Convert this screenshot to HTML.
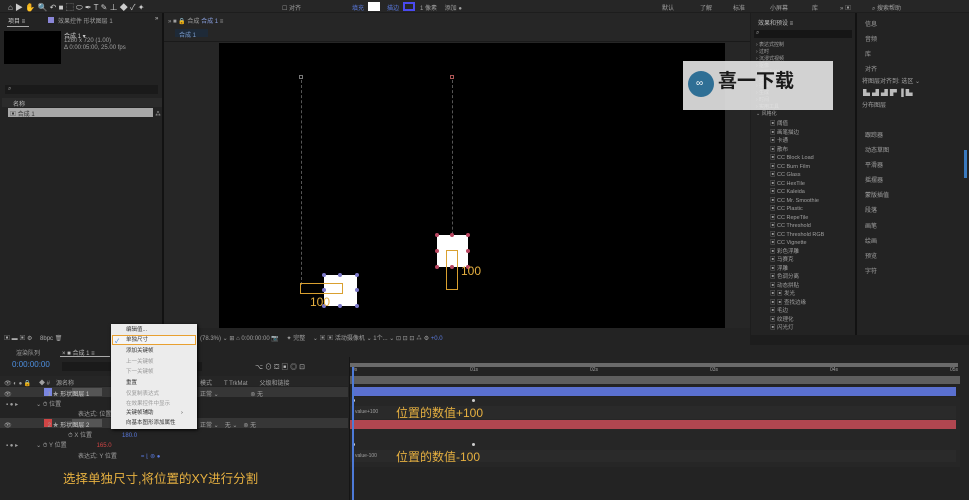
<!DOCTYPE html>
<html><head><meta charset="utf-8"><style>
*{margin:0;padding:0;box-sizing:border-box}
body{width:969px;height:500px;background:#1d1d1d;position:relative;overflow:hidden;font-family:"Liberation Sans","Noto Sans CJK SC",sans-serif;color:#9a9a9a;font-size:6px}
.a{position:absolute}
.t{position:absolute;white-space:nowrap;font-size:6px;color:#a0a0a0}
.cn{font-family:"Liberation Sans","Noto Sans CJK SC",sans-serif}
.dot{position:absolute;width:4px;height:4px;border-radius:50%}
</style></head><body>
<!-- top toolbar -->
<div class="a" style="left:0;top:0;width:969px;height:12px;background:#262626"></div>
<div class="t" style="left:8px;top:2px;color:#ccc;font-size:8px">⌂ ▶ ✋ 🔍 ↶ ■ ⬚ ⬭ ✒ T ✎ ⊥ ◆ ✓ ✦</div>
<div class="t" style="left:282px;top:3px">☐ 对齐</div>
<div class="t" style="left:352px;top:3px;color:#5a7adf">填充</div>
<div class="a" style="left:368px;top:2px;width:12px;height:9px;background:#fff"></div>
<div class="t" style="left:387px;top:3px;color:#5a7adf">描边</div>
<div class="a" style="left:403px;top:2px;width:12px;height:9px;border:2px solid #4a4af0"></div>
<div class="t" style="left:420px;top:3px">1 像素　 添加 ●</div>
<div class="t" style="left:662px;top:3px">默认</div><div class="t" style="left:700px;top:3px">了解</div>
<div class="t" style="left:733px;top:3px">标准</div><div class="t" style="left:770px;top:3px">小屏幕</div>
<div class="t" style="left:812px;top:3px">库</div><div class="t" style="left:840px;top:3px">» ▣</div>
<div class="t" style="left:872px;top:3px">⌕ 搜索帮助</div>
<!-- left project panel -->
<div class="a" style="left:0;top:13px;width:162px;height:315px;background:#232323"></div>
<div class="t" style="left:8px;top:16px;color:#ccc">项目 ≡</div>
<div class="a" style="left:7px;top:26px;width:22px;height:1px;background:#aaa"></div>
<div class="a" style="left:48px;top:17px;width:6px;height:6px;background:#8a86d8"></div>
<div class="t" style="left:58px;top:16px">效果控件 形状图层 1</div>
<div class="t" style="left:155px;top:16px;color:#ccc">»</div>
<div class="a" style="left:4px;top:31px;width:57px;height:33px;background:#000"></div>
<div class="t" style="left:64px;top:31px;color:#ccc">合成 1 ▾</div>
<div class="t" style="left:64px;top:38px">1280 x 720 (1.00)</div>
<div class="t" style="left:64px;top:45px">Δ 0:00:05:00, 25.00 fps</div>
<div class="a" style="left:5px;top:85px;width:153px;height:9px;background:#1a1a1a"></div>
<div class="t" style="left:8px;top:86px">⌕</div>
<div class="a" style="left:2px;top:98px;width:160px;height:9px;background:#2b2b2b"></div>
<div class="t" style="left:13px;top:99px;color:#bbb">名称</div>
<div class="a" style="left:8px;top:108px;width:145px;height:9px;background:#a8a8a8"></div>
<div class="t" style="left:10px;top:109px;color:#333">▣ 合成 1</div>
<div class="t" style="left:155px;top:109px;color:#ccc">⁂</div>
<div class="a" style="left:162px;top:13px;width:2px;height:315px;background:#121212"></div>
<!-- comp panel -->
<div class="a" style="left:164px;top:13px;width:586px;height:315px;background:#262626"></div>
<div class="t" style="left:168px;top:16px">» ■ 🔒 合成 <span style="color:#8aa0e0">合成 1</span> ≡</div>
<div class="a" style="left:175px;top:29px;width:33px;height:8px;background:#1e2a38"></div>
<div class="t" style="left:179px;top:30px;color:#7b9ccc">合成 1</div>
<div class="a" style="left:164px;top:41px;width:586px;height:1px;background:#1a1a1a"></div>
<div class="a" style="left:219px;top:43px;width:506px;height:285px;background:#000"></div>
<!-- comp content -->
<div class="a" style="left:301px;top:80px;width:0;height:205px;border-left:1px dashed #555"></div>
<div class="a" style="left:452px;top:80px;width:0;height:185px;border-left:1px dashed #555"></div>
<div class="a" style="left:299px;top:75px;width:4px;height:4px;border:1px solid #777"></div>
<div class="a" style="left:450px;top:75px;width:4px;height:4px;border:1px solid #a55"></div>
<div class="a" style="left:324px;top:275px;width:33px;height:31px;background:#fff"></div>
<div class="a" style="left:300px;top:283px;width:43px;height:11px;border:1px solid #d9a030"></div>
<div class="dot" style="left:322px;top:273px;background:#7b78c8"></div><div class="dot" style="left:338px;top:273px;background:#7b78c8"></div><div class="dot" style="left:355px;top:273px;background:#7b78c8"></div>
<div class="dot" style="left:355px;top:288px;background:#7b78c8"></div><div class="dot" style="left:322px;top:288px;background:#7b78c8"></div>
<div class="dot" style="left:322px;top:304px;background:#7b78c8"></div><div class="dot" style="left:338px;top:304px;background:#7b78c8"></div><div class="dot" style="left:355px;top:304px;background:#7b78c8"></div>
<div class="t" style="left:310px;top:295px;color:#e6b040;font-size:12px">100</div>
<div class="a" style="left:437px;top:235px;width:31px;height:32px;background:#fff"></div>
<div class="dot" style="left:435px;top:233px;background:#b84560"></div><div class="dot" style="left:450px;top:233px;background:#b84560"></div><div class="dot" style="left:466px;top:233px;background:#b84560"></div>
<div class="dot" style="left:435px;top:249px;background:#b84560"></div><div class="dot" style="left:466px;top:249px;background:#b84560"></div>
<div class="dot" style="left:435px;top:265px;background:#b84560"></div><div class="dot" style="left:450px;top:265px;background:#b84560"></div><div class="dot" style="left:466px;top:265px;background:#b84560"></div>
<div class="a" style="left:446px;top:250px;width:12px;height:40px;border:1px solid #d9a030"></div>
<div class="t" style="left:461px;top:264px;color:#e6b040;font-size:12px">100</div>
<!-- comp bottom toolbar -->
<div class="a" style="left:0;top:328px;width:750px;height:17px;background:#232323"></div>
<div class="t" style="left:4px;top:333px;color:#aaa">▣ ▬ ▣ ⚙ 　8bpc 🗑</div>
<div class="t" style="left:200px;top:333px">(78.3%) ⌄ ⊞ ⌂ 0:00:00:00 📷 　✦ 完整 　⌄ ▣ ▣ 活动摄像机 ⌄ 1个... ⌄ ⊡ ⊡ ⊡ ⁂ ⚙ <span style="color:#5a7adf">+0.0</span></div>
<!-- effects panel -->
<div class="a" style="left:751px;top:13px;width:104px;height:322px;background:#232323"></div>
<div class="t" style="left:758px;top:18px;color:#bbb">效果和预设 ≡</div>
<div class="a" style="left:754px;top:30px;width:98px;height:8px;background:#161616"></div>
<div class="t" style="left:756px;top:30px">⌕</div>
<div class="t" style="left:756px;top:42px;line-height:6.9px;font-size:5px">› 表达式控制<br>› 过时<br>› 沉浸式视频<br>› 抠像<br>› 模糊和锐化<br>› 模拟<br>› 扭曲<br>› 生成<br>› 时间<br>› 实用工具<br>⌄ 风格化</div>
<div class="t" style="left:770px;top:120px;line-height:8.5px;font-size:5.5px">▣ 阈值<br>▣ 画笔描边<br>▣ 卡通<br>▣ 散布<br>▣ CC Block Load<br>▣ CC Burn Film<br>▣ CC Glass<br>▣ CC HexTile<br>▣ CC Kaleida<br>▣ CC Mr. Smoothie<br>▣ CC Plastic<br>▣ CC RepeTile<br>▣ CC Threshold<br>▣ CC Threshold RGB<br>▣ CC Vignette<br>▣ 彩色浮雕<br>▣ 马赛克<br>▣ 浮雕<br>▣ 色调分离<br>▣ 动态拼贴<br>▣ ▣ 发光<br>▣ ▣ 查找边缘<br>▣ 毛边<br>▣ 纹理化<br>▣ 闪光灯</div>
<div class="a" style="left:855px;top:13px;width:2px;height:322px;background:#121212"></div>
<!-- right panel -->
<div class="a" style="left:857px;top:13px;width:112px;height:322px;background:#232323"></div>
<div class="t" style="left:865px;top:18px;line-height:15px">信息<br>音频<br>库<br>对齐</div>
<div class="t" style="left:862px;top:76px">将图层对齐到: 选区 ⌄</div>
<div class="t" style="left:863px;top:88px;color:#bbb;font-size:7px">▙ ▟ ▟ ▛ ▐ ▙</div>
<div class="t" style="left:862px;top:100px">分布图层</div>
<div class="t" style="left:865px;top:129px;line-height:15.1px">跟踪器<br>动态草图<br>平滑器<br>摇摆器<br>蒙版插值<br>段落<br>画笔<br>绘画<br>预览<br>字符</div>
<div class="a" style="left:964px;top:150px;width:3px;height:28px;background:#3a7abf"></div>
<!-- watermark -->
<div class="a" style="left:683px;top:61px;width:150px;height:49px;background:rgba(230,230,230,0.9)"></div>
<div class="a" style="left:688px;top:71px;width:26px;height:26px;border-radius:50%;background:#2f6f95"></div>
<div class="t" style="left:696px;top:78px;color:#fff;font-size:10px">∞</div>
<div class="t" style="left:718px;top:66px;color:#1a1a1a;font-size:19px;font-weight:bold">喜一下载</div>
<!-- timeline -->
<div class="a" style="left:0;top:345px;width:969px;height:155px;background:#232323"></div>
<div class="t" style="left:16px;top:348px">渲染队列</div>
<div class="t" style="left:62px;top:348px;color:#bbb">× ■ 合成 1 ≡</div>
<div class="a" style="left:60px;top:356px;width:50px;height:1px;background:#aaa"></div>
<div class="t" style="left:12px;top:360px;color:#4d8fe0;font-size:8px">0:00:00:00</div>
<div class="a" style="left:62px;top:362px;width:140px;height:9px;background:#1a1a1a"></div>
<div class="t" style="left:255px;top:362px;color:#bbb;font-size:7px">⌥ ⊙ ⛋ ▣ ◎ ⊡</div>
<div class="a" style="left:0;top:376px;width:348px;height:10px;background:#262626"></div>
<div class="t" style="left:4px;top:378px">👁 ◐ ● 🔒 　◆ #　源名称</div>
<div class="t" style="left:200px;top:378px">模式　　T TrkMat　　父级和链接</div>
<div class="a" style="left:0;top:387px;width:348px;height:10px;background:#363636"></div>
<div class="a" style="left:44px;top:388px;width:8px;height:8px;background:#7a86e0"></div>
<div class="a" style="left:72px;top:388px;width:30px;height:8px;background:#555"></div>
<div class="t" style="left:4px;top:389px">👁　　　　　　1 ★ <span style="color:#ccc">形状图层 1</span></div>
<div class="t" style="left:200px;top:389px">正常 ⌄ 　　　　　⊚ 无</div>
<div class="t" style="left:6px;top:399px">▪ ● ▸　　　⌄ ⏱ 位置</div>
<div class="t" style="left:78px;top:409px">表达式: 位置</div>
<div class="a" style="left:0;top:418px;width:348px;height:10px;background:#363636"></div>
<div class="a" style="left:44px;top:419px;width:8px;height:8px;background:#d04545"></div>
<div class="a" style="left:72px;top:419px;width:30px;height:8px;background:#555"></div>
<div class="t" style="left:4px;top:420px">👁　　　　　　2 ★ <span style="color:#ccc">形状图层 2</span></div>
<div class="t" style="left:200px;top:420px">正常 ⌄　无 ⌄　⊚ 无</div>
<div class="t" style="left:68px;top:430px">⏱ X 位置　　　　　<span style="color:#5a7adf">180.0</span></div>
<div class="t" style="left:6px;top:440px">▪ ● ▸　　　⌄ ⏱ Y 位置　　　　　<span style="color:#d04545">165.0</span></div>
<div class="t" style="left:78px;top:451px">表达式: Y 位置　　　　<span style="color:#5a7adf">= ⌊ ⊚ ●</span></div>
<div class="t cn" style="left:63px;top:468px;color:#e6b040;font-size:12.5px">选择单独尺寸,将位置的XY进行分割</div>
<!-- timeline right -->
<div class="a" style="left:349px;top:357px;width:1px;height:143px;background:#151515"></div>
<div class="a" style="left:350px;top:363px;width:608px;height:4px;background:#6a6a6a"></div>
<div class="t" style="left:352px;top:367px;font-size:5px">0s</div><div class="t" style="left:470px;top:367px;font-size:5px">01s</div><div class="t" style="left:590px;top:367px;font-size:5px">02s</div><div class="t" style="left:710px;top:367px;font-size:5px">03s</div><div class="t" style="left:830px;top:367px;font-size:5px">04s</div><div class="t" style="left:950px;top:367px;font-size:5px">05s</div>
<div class="a" style="left:350px;top:376px;width:610px;height:8px;background:#5e5e5e"></div>
<div class="a" style="left:352px;top:387px;width:604px;height:9px;background:#5a70d0"></div>
<div class="a" style="left:350px;top:397px;width:610px;height:70px;background:#262626"></div>
<div class="a" style="left:350px;top:420px;width:606px;height:9px;background:#b04650"></div>
<div class="a" style="left:350px;top:406px;width:606px;height:13px;background:#2a2a2a"></div>
<div class="a" style="left:350px;top:450px;width:606px;height:12px;background:#2a2a2a"></div>
<div class="dot" style="left:352px;top:399px;width:3px;height:3px;background:#ccc"></div><div class="dot" style="left:472px;top:399px;width:3px;height:3px;background:#ccc"></div>
<div class="dot" style="left:352px;top:443px;width:3px;height:3px;background:#ccc"></div><div class="dot" style="left:472px;top:443px;width:3px;height:3px;background:#ccc"></div>
<div class="t" style="left:355px;top:409px;font-size:5px">value+100</div>
<div class="t cn" style="left:396px;top:404px;color:#e6b040;font-size:12px">位置的数值+100</div>
<div class="t" style="left:355px;top:453px;font-size:5px">value-100</div>
<div class="t cn" style="left:396px;top:448px;color:#e6b040;font-size:12px">位置的数值-100</div>
<div class="a" style="left:352px;top:367px;width:2px;height:133px;background:#4d7ad8"></div>
<!-- context menu -->
<div class="a" style="left:111px;top:324px;width:86px;height:105px;background:#ececec;box-shadow:1px 1px 3px #000"></div>
<div class="a" style="left:112px;top:335px;width:84px;height:10px;border:1px solid #e8a030;background:#f5f5f5"></div>
<div class="t" style="left:115px;top:336px;color:#3a7ad0">✓</div>
<div class="t" style="left:126px;top:326px;color:#333;line-height:9.5px;font-size:5.5px">编辑值...<br>单独尺寸<br><span style="line-height:13px">添加关键帧</span><br><span style="color:#999">上一关键帧<br>下一关键帧</span><br><span style="line-height:13px">重置</span><br><span style="color:#999">仅复制表达式<br>在效果控件中显示</span><br>关键帧辅助　　　　　›<br>向基本图形添加属性</div>
</body></html>
